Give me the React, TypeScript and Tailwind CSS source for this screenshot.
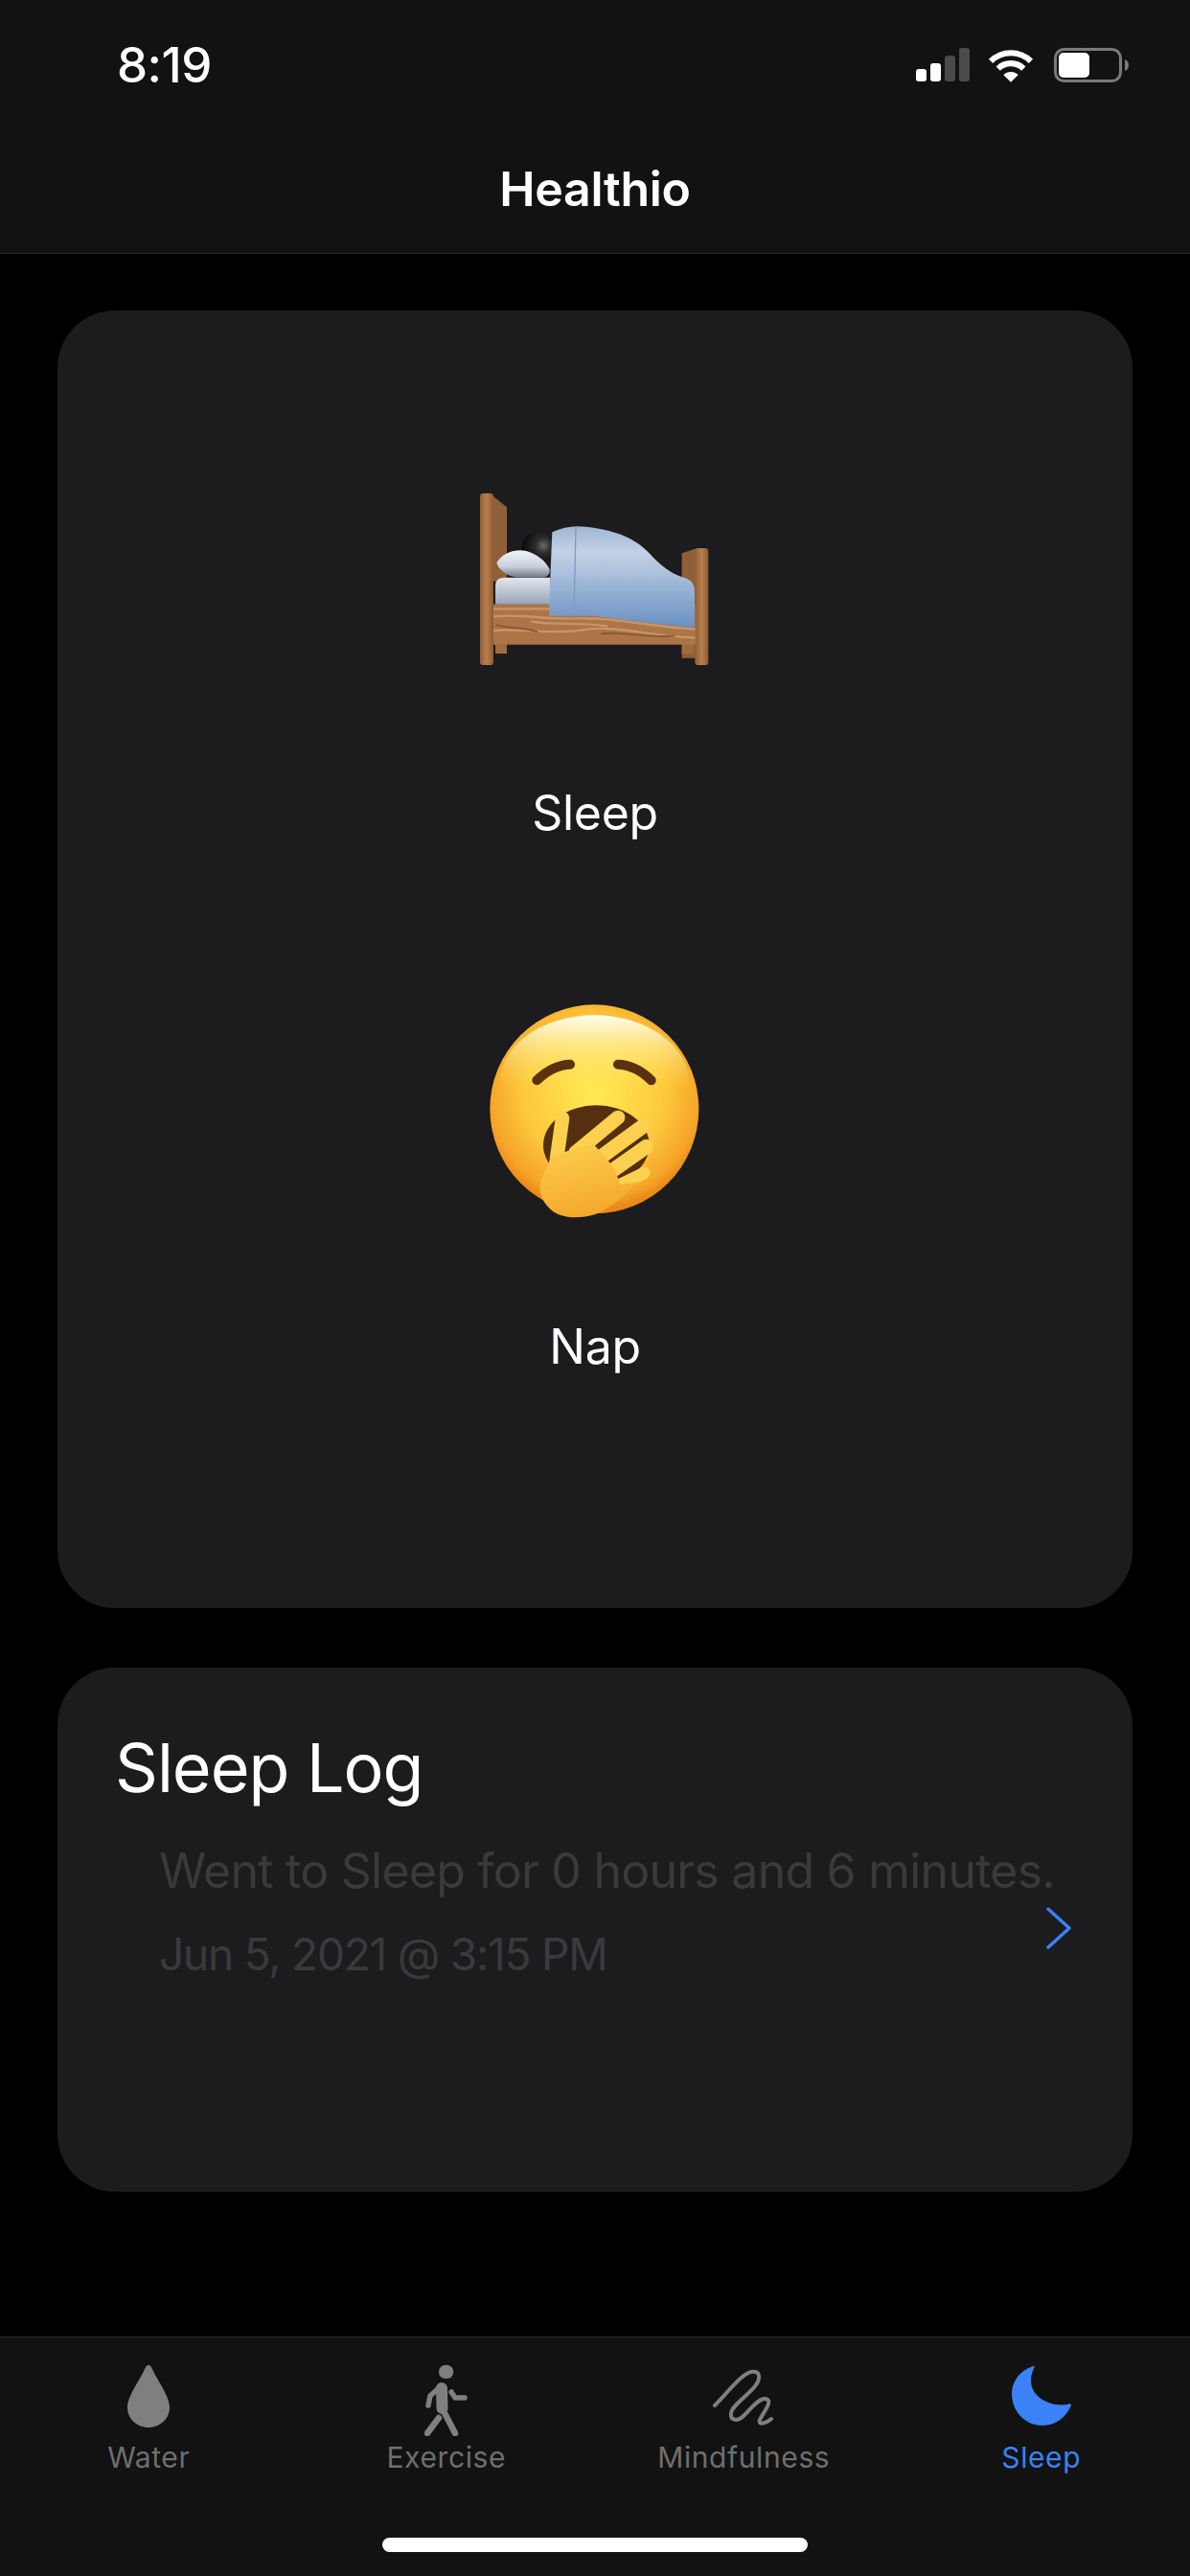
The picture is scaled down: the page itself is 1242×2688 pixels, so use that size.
function SignalIcon() {
  return (
    <svg width="56" height="36" viewBox="0 0 56 36">
      <rect x="0" y="22" width="11" height="13" rx="3" fill="#fff" />
      <rect x="15" y="16" width="11" height="19" rx="3" fill="#fff" />
      <rect x="30" y="8" width="11" height="27" rx="3" fill="#4a4a4a" />
      <rect x="45" y="0" width="11" height="35" rx="3" fill="#4a4a4a" />
    </svg>
  );
}

function WifiIcon() {
  return (
    <svg width="48" height="36" viewBox="0 0 47 35" fill="none">
      <path d="M3 13.5A29 29 0 0 1 44 13.5" stroke="#fff" strokeWidth="6" />
      <path d="M10.5 21A18.5 18.5 0 0 1 36.5 21" stroke="#fff" strokeWidth="6" />
      <path d="M23.5 35L16 27.5A10.6 10.6 0 0 1 31 27.5Z" fill="#fff" />
    </svg>
  );
}

function BatteryIcon() {
  return (
    <svg width="78" height="36" viewBox="0 0 78 36" fill="none">
      <rect x="1.5" y="1.5" width="68" height="33" rx="9" stroke="#7a7a7a" strokeWidth="3" />
      <rect x="5" y="5" width="32" height="26" rx="5" fill="#fff" />
      <path d="M74 12C77 13 78 15.5 78 18C78 20.5 77 23 74 24Z" fill="#7a7a7a" />
    </svg>
  );
}

function BedEmoji() {
  return (
    <svg width="320" height="240" viewBox="0 0 960 720">
      <defs>
        <linearGradient id="post" x1="0" x2="1" y1="0" y2="0">
          <stop offset="0" stopColor="#8f5f38" />
          <stop offset="0.5" stopColor="#b97f4c" />
          <stop offset="1" stopColor="#8a5a34" />
        </linearGradient>
        <linearGradient id="dome" x1="0" x2="0" y1="0" y2="1">
          <stop offset="0" stopColor="#9fb7d6" />
          <stop offset="0.5" stopColor="#c3d1e5" />
          <stop offset="1" stopColor="#a9bedb" />
        </linearGradient>
        <linearGradient id="lower" x1="0" x2="0" y1="0" y2="1">
          <stop offset="0" stopColor="#a6bcda" />
          <stop offset="1" stopColor="#6a90c0" />
        </linearGradient>
        <linearGradient id="sheet" x1="0" x2="0" y1="0" y2="1">
          <stop offset="0" stopColor="#e3e8f0" />
          <stop offset="1" stopColor="#98a3b3" />
        </linearGradient>
        <linearGradient id="pillow" x1="0" x2="0" y1="0" y2="1">
          <stop offset="0" stopColor="#f1f4f8" />
          <stop offset="0.6" stopColor="#c7d0dc" />
          <stop offset="1" stopColor="#6d7683" />
        </linearGradient>
        <radialGradient id="hair" cx="0.68" cy="0.42" r="0.7">
          <stop offset="0" stopColor="#6a6a6a" />
          <stop offset="0.35" stopColor="#2c2c2c" />
          <stop offset="1" stopColor="#060606" />
        </radialGradient>
      </defs>
      <path d="M150 104L204 148V380H150Z" fill="#8f5f38" />
      <path d="M752 292L800 276V620H752Z" fill="#8f5f38" />
      <rect x="168" y="570" width="36" height="36" fill="#a06c3e" />
      <rect x="752" y="570" width="36" height="36" fill="#a06c3e" />
      <rect x="120" y="104" width="42" height="538" rx="10" fill="url(#post)" />
      <rect x="793" y="276" width="42" height="366" rx="10" fill="url(#post)" />
      <rect x="162" y="452" width="632" height="126" fill="#ad7546" />
      <path d="M162 490C260 480 300 500 420 496S640 520 794 530M162 534C240 524 330 549 440 532S640 552 794 556M280 505C360 520 420 505 520 520M162 466H340" stroke="#c8946a" strokeWidth="7" fill="none" />
      <path d="M170 516C220 530 250 522 300 538M500 544C580 534 640 560 730 550" stroke="#8a5a32" strokeWidth="6" fill="none" />
      <path d="M168 392C168 376 180 368 196 368H340V452H168Z" fill="url(#sheet)" />
      <circle cx="300" cy="276" r="50" fill="url(#hair)" />
      <path d="M172 322C190 290 230 278 262 284C296 292 326 316 338 342C340 358 330 368 316 368H240C205 366 180 346 172 322Z" fill="url(#pillow)" />
      <path d="M346 226C370 214 400 208 424 208C520 212 600 238 650 292C690 336 720 356 752 366H340Z" fill="url(#dome)" />
      <path d="M340 366H752C778 372 792 386 792 410V524C700 516 560 500 480 488H336Z" fill="url(#lower)" />
      <path d="M420 208L414 484" stroke="#7f9cc0" strokeWidth="4" />
    </svg>
  );
}

const fingers = [
  { d: "M297 590L318 441", w: 44 },
  { d: "M358 549L492 438", w: 44 },
  { d: "M448 555L567 468", w: 46 },
  { d: "M481 600L580 530", w: 46 },
  { d: "M500 648L574 612", w: 38 },
];

function YawnEmoji() {
  return (
    <svg width="280" height="280" viewBox="0 0 840 840">
      <defs>
        <radialGradient id="face" cx="0.5" cy="0.42" r="0.56">
          <stop offset="0" stopColor="#ffea55" />
          <stop offset="0.6" stopColor="#fdc93c" />
          <stop offset="0.9" stopColor="#f6a428" />
          <stop offset="1" stopColor="#e98a18" />
        </radialGradient>
        <linearGradient id="shine" x1="0" x2="0" y1="0" y2="1">
          <stop offset="0" stopColor="#fffdf2" />
          <stop offset="0.55" stopColor="#ffea55" stopOpacity="0" />
        </linearGradient>
        <linearGradient id="hand" x1="0" x2="0.3" y1="0" y2="1">
          <stop offset="0" stopColor="#fdd04f" />
          <stop offset="1" stopColor="#f5a92c" />
        </linearGradient>
      </defs>
      <circle cx="418" cy="412" r="327" fill="url(#face)" />
      <ellipse cx="418" cy="330" rx="296" ry="212" fill="url(#shine)" />
      <path d="M238 322C270 290 310 272 342 272" stroke="#5a3210" strokeWidth="30" strokeLinecap="round" fill="none" />
      <path d="M492 272C525 272 565 290 596 322" stroke="#5a3210" strokeWidth="30" strokeLinecap="round" fill="none" />
      <ellipse cx="424" cy="525" rx="166" ry="125" fill="#54300f" />
      <g strokeLinecap="round" fill="none">
        {fingers.map((f) => (
          <path key={f.d} d={f.d} strokeWidth={f.w} stroke="#fdd04f" />
        ))}
      </g>
      <path
        d="M250 640C258 605 280 590 280 560L345 540L412 520L448 555L481 600L500 648L560 640C520 665 480 720 420 742C360 760 300 750 275 720C250 695 245 670 250 640Z"
        fill="url(#hand)"
      />
    </svg>
  );
}

function DropIcon() {
  return (
    <svg width="44" height="65" viewBox="0 0 44 65">
      <path d="M22 0C24 0 25 2 26 4C30 14 44 32 44 44C44 56 34 65 22 65C10 65 0 56 0 44C0 32 14 14 18 4C19 2 20 0 22 0Z" fill="#7f7f7f" />
    </svg>
  );
}

function WalkIcon() {
  return (
    <svg width="46" height="74" viewBox="0 0 46 74" fill="none" stroke="#7f7f7f" strokeLinecap="round" strokeLinejoin="round">
      <ellipse cx="22.6" cy="7" rx="7.7" ry="7.3" fill="#7f7f7f" stroke="none" />
      <path d="M18 24L18.5 45" strokeWidth="12" />
      <path d="M16 23L6 32L4 42" strokeWidth="5.5" />
      <path d="M28 28L32 34L42 34" strokeWidth="5.5" />
      <path d="M19 46L32 71" strokeWidth="6.5" />
      <path d="M15 55L3 71" strokeWidth="6.5" />
    </svg>
  );
}

function SquiggleIcon() {
  return (
    <svg width="64" height="60" viewBox="0 0 64 60" fill="none" className="mt-[4px]">
      <path
        d="M2 38C15 25 30 5 40 3C50 1 50 10 44 18C36 28 20 38 19 46C18 54 26 55 32 49C40 41 48 30 55 31C64 33 52 46 49 53C47 59 55 57 61 52"
        stroke="#7f7f7f"
        strokeWidth="4"
        strokeLinecap="round"
      />
    </svg>
  );
}

function MoonIcon() {
  return (
    <svg width="62" height="63" viewBox="0 0 62 63">
      <path d="M22 1C8 6 0 17 0 30C0 48 14 63 32 63C46 63 57 54 62 42C62 40 60 40 58 41C40 44 19 33 20 15C20 10 22 6 23.5 2C24 .5 23 .5 22 1Z" fill="#3b82f6" />
    </svg>
  );
}

const tabs = [
  { label: "Water", icon: <DropIcon /> },
  { label: "Exercise", icon: <WalkIcon /> },
  { label: "Mindfulness", icon: <SquiggleIcon /> },
  { label: "Sleep", icon: <MoonIcon />, active: true },
];

export default function App() {
  return (
    <div className="h-[2688px] w-[1242px] flex flex-col bg-black font-[Inter,sans-serif] text-white overflow-hidden">
      {/* Header */}
      <header className="h-[265px] shrink-0 bg-[#121212] border-b border-[#2a2a2a]">
        <div className="flex items-start justify-between pt-[50px] pl-[122px] pr-[64px] h-[167px]">
          <span className="text-[51px] leading-[36px] font-medium tracking-[-0.5px]">8:19</span>
          <div className="flex items-start">
            <SignalIcon />
            <div className="ml-[19px] mr-[21px]">
              <WifiIcon />
            </div>
            <BatteryIcon />
          </div>
        </div>
        <h1 className="text-center text-[50px] leading-[60px] font-semibold tracking-[-0.3px]">Healthio</h1>
      </header>

      <main className="flex-1 flex flex-col px-[60px] pt-[59px]">
        {/* Sleep / Nap */}
        <section className="h-[1354px] rounded-[60px] bg-[#1c1c1e] flex flex-col items-center pt-[156px]">
          <BedEmoji />
          <p className="mt-[98px] text-[50px] leading-[60px] tracking-[-0.3px]">Sleep</p>
          <div className="mt-[142px]">
            <YawnEmoji />
          </div>
          <p className="mt-[75px] text-[50px] leading-[60px] tracking-[-0.3px]">Nap</p>
        </section>

        {/* Log */}
        <section className="mt-[62px] h-[547px] rounded-[60px] bg-[#1c1c1e] pl-[60px] pr-[64px] pt-[62px]">
          <h2 className="text-[70px] leading-[86px] tracking-[-1px]">Sleep Log</h2>
          <div className="flex items-center justify-between pl-[46px] mt-[34px]">
            <div>
              <p className="text-[50px] leading-[60px] tracking-[-0.75px] text-[#3a3a3c] whitespace-nowrap">
                Went to Sleep for 0 hours and 6 minutes.
              </p>
              <p className="mt-[27px] text-[46px] leading-[60px] tracking-[-1.2px] text-[#3a3a3c]">
                Jun 5, 2021 @ 3:15 PM
              </p>
            </div>
            <svg width="26" height="44" viewBox="0 0 26 44" fill="none" className="shrink-0 mt-[32px] -ml-[20px]">
              <path d="M2 2L24 22L2 42" stroke="#3b82f6" strokeWidth="3.5" strokeLinecap="round" strokeLinejoin="round" />
            </svg>
          </div>
        </section>
      </main>

      {/* Tab bar */}
      <nav className="h-[250px] shrink-0 bg-[#121212] border-t border-[#2a2a2a] flex flex-col">
        <div className="grid grid-cols-4 pt-[29px]">
          {tabs.map((tab) => (
            <div key={tab.label} className="flex flex-col items-center">
              <div className="h-[78px] flex items-start justify-center">{tab.icon}</div>
              <span
                className={
                  tab.active
                    ? "text-[30px] leading-[36px] tracking-[0.6px] text-[#3b82f6]"
                    : "text-[30px] leading-[36px] tracking-[0.6px] text-[#6e6e6e]"
                }
              >
                {tab.label}
              </span>
            </div>
          ))}
        </div>
        <div className="mt-auto mb-[25px] mx-auto w-[444px] h-[15px] rounded-full bg-white" />
      </nav>
    </div>
  );
}
